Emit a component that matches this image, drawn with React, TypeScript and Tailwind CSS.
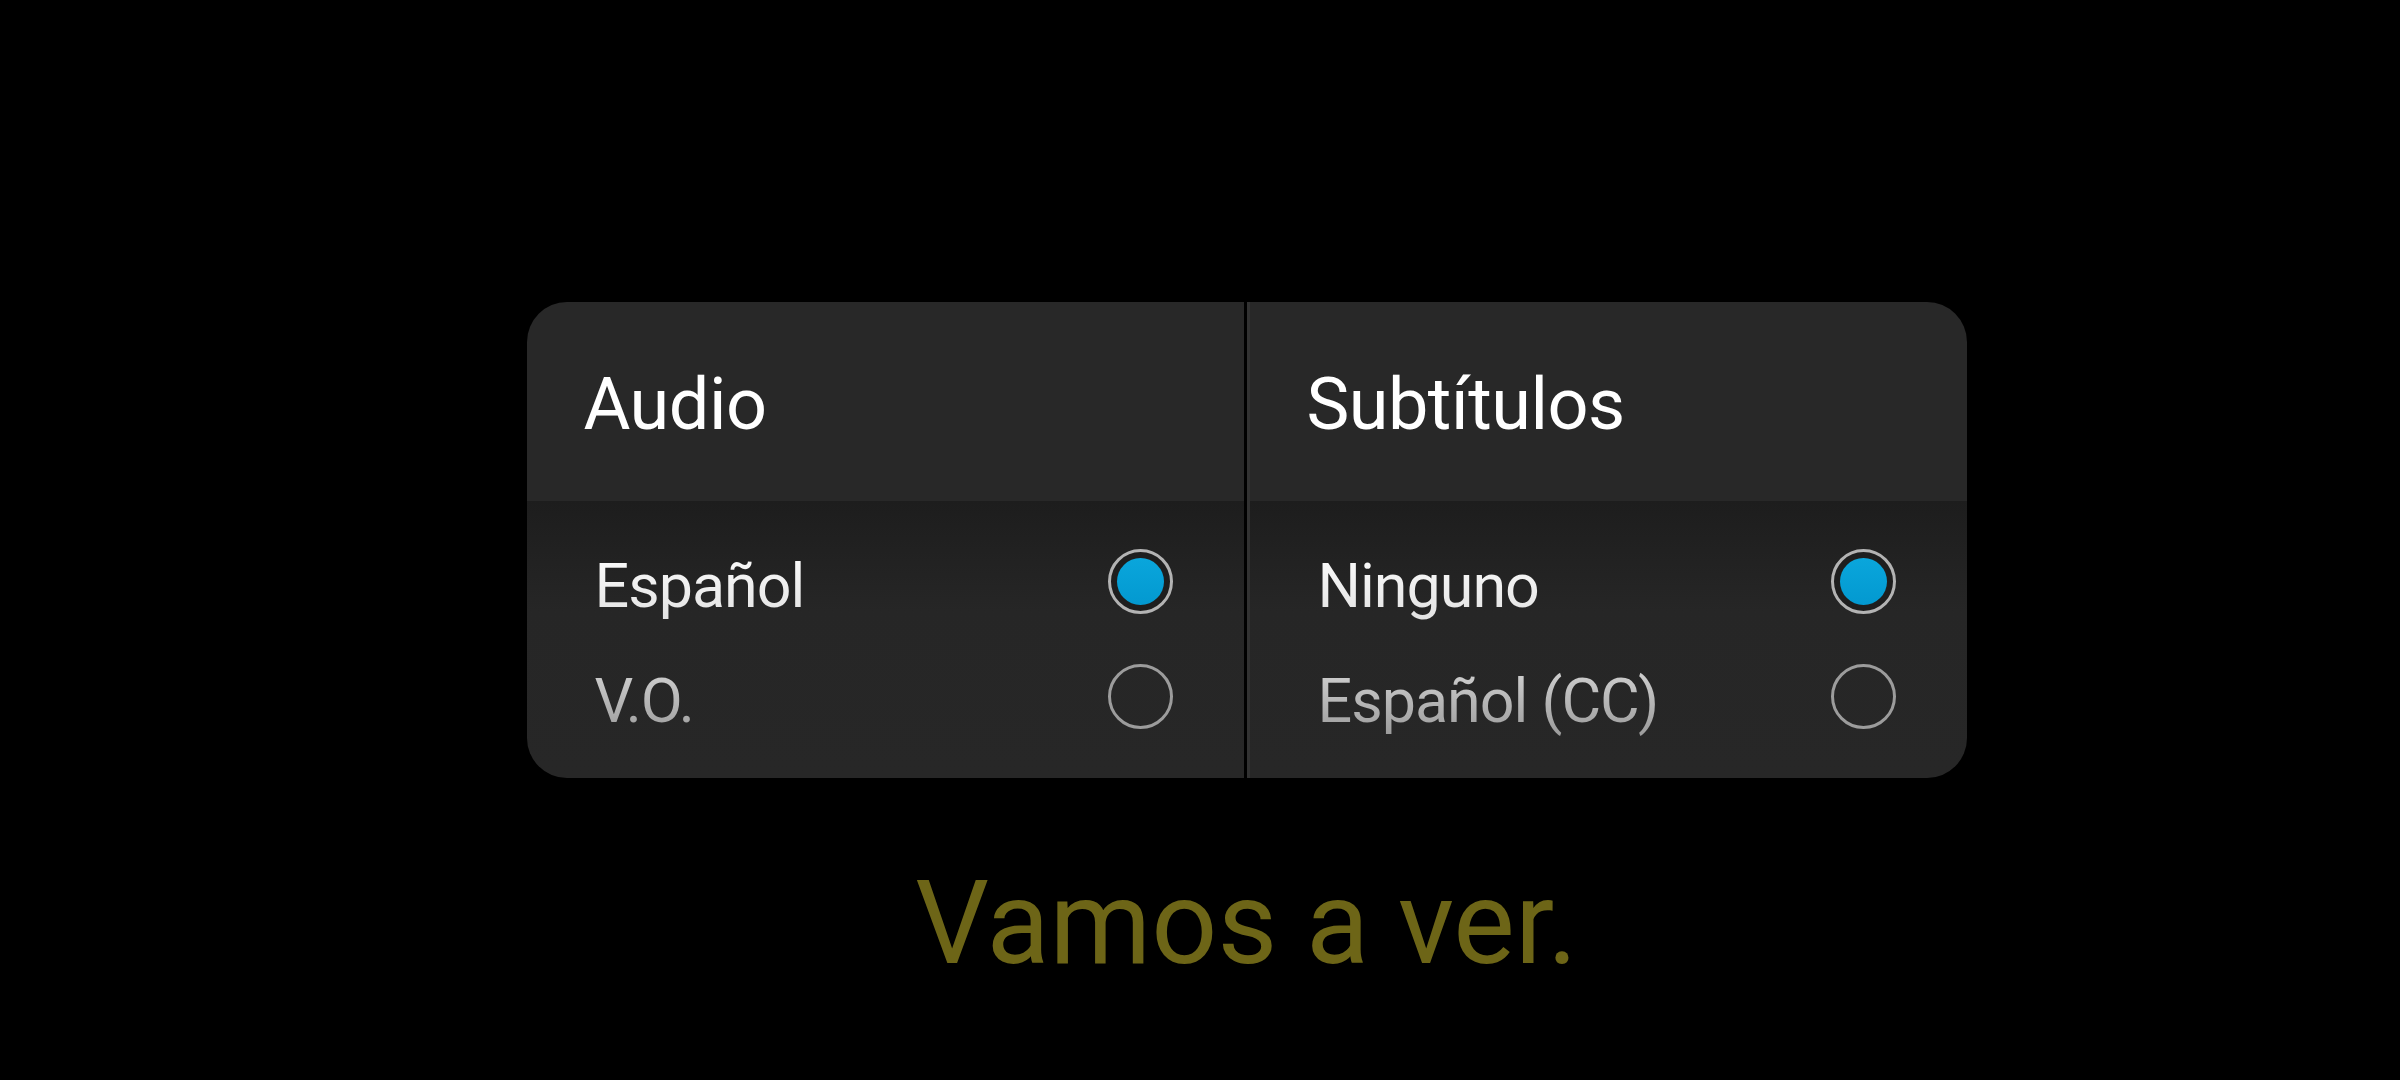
type Option = { label: string; selected: boolean };

const Radio = ({ selected }: { selected: boolean }) => {
  return (
    <div
      className={
        selected
          ? "w-[65px] h-[65px] rounded-full border-[3px] border-[#b3b3b3] bg-[#1e1e1e] flex items-center justify-center"
          : "w-[65px] h-[65px] rounded-full border-[3px] border-[#9c9c9c]"
      }
    >
      {selected && (
        <div className="w-[47px] h-[47px] rounded-full bg-gradient-to-b from-[#0aa6dc] to-[#0399d0]" />
      )}
    </div>
  );
};

const Column = ({ title, options }: { title: string; options: Option[] }) => {
  return (
    <div className="flex-1 flex flex-col">
      <div className="h-[199px] bg-[#282828] flex items-center pl-[57px] pt-[6px]">
        <h2 className="text-[72px] leading-none text-white tracking-[-0.5px]">{title}</h2>
      </div>
      <div className="flex-1 bg-gradient-to-b from-[#1d1d1d] via-[#262626] via-40% to-[#272727] py-[23px]">
        {options.map((o) => (
          <div
            key={o.label}
            className="h-[115px] flex items-center justify-between pl-[68px] pr-[71px]"
          >
            <span
              className={
                o.selected
                  ? "text-[61px] leading-none tracking-[-1px] pt-[13px] pb-[4px] bg-gradient-to-b from-white to-[#e2e2e2] bg-clip-text text-transparent"
                  : "text-[61px] leading-none tracking-[-1px] pt-[13px] pb-[4px] bg-gradient-to-b from-[#dadada] to-[#9b9b9b] bg-clip-text text-transparent"
              }
            >
              {o.label}
            </span>
            <Radio selected={o.selected} />
          </div>
        ))}
      </div>
    </div>
  );
};

export default function App() {
  return (
    <div
      className="w-[2400px] h-[1080px] bg-black flex flex-col items-center pt-[302px] pl-[93px]"
      style={{ fontFamily: "Roboto, 'Noto Sans', sans-serif" }}
    >
      <div className="w-[1440px] h-[476px] rounded-[40px] overflow-hidden flex">
        <Column
          title="Audio"
          options={[
            { label: "Español", selected: true },
            { label: "V.O.", selected: false },
          ]}
        />
        <div className="w-[6px] flex">
          <div className="w-[3px] bg-black" />
          <div className="w-[3px] bg-[#323232]" />
        </div>
        <Column
          title="Subtítulos"
          options={[
            { label: "Ninguno", selected: true },
            { label: "Español (CC)", selected: false },
          ]}
        />
      </div>
      <p className="mt-[87px] text-[116px] leading-none text-[#6d6517]">
        Vamos a ver.
      </p>
    </div>
  );
}
